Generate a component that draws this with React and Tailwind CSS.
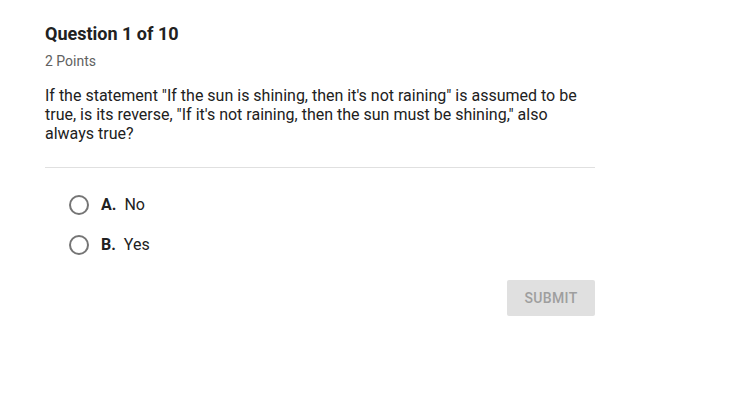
export default function App() {
  const options = [
    { key: 'A', text: 'No' },
    { key: 'B', text: 'Yes' },
  ];

  return (
    <div className="min-h-screen bg-white font-['Roboto',sans-serif] text-[#212121]">
      <div className="w-[550px] ml-[45px] pt-[24px]">
        {/* Header */}
        <h1 className="text-[18px] leading-[20px] font-bold text-[#212121]">Question 1 of 10</h1>
        <p className="mt-[9px] text-[14px] leading-[16px] text-[#616161]">2 Points</p>

        {/* Question */}
        <p className="mt-[17px] text-[16px] leading-[19px] text-[#212121] pb-[24px] border-b border-[#e0e0e0]">
          If the statement "If the sun is shining, then it's not raining" is assumed to be true, is its reverse, "If it's not raining, then the sun must be shining," also always true?
        </p>

        {/* Options */}
        <div className="mt-[27px] pl-[24px] flex flex-col gap-[20px]">
          {options.map((opt) => (
            <label key={opt.key} className="flex items-center h-[20px] cursor-pointer">
              <span className="w-[20px] h-[20px] rounded-full border-2 border-[#757575] shrink-0" />
              <span className="ml-[12px] text-[16px] font-bold text-[#212121]">{opt.key}.</span>
              <span className="ml-[8px] text-[16px] text-[#212121]">{opt.text}</span>
            </label>
          ))}
        </div>

        {/* Submit */}
        <div className="mt-[25px] flex justify-end">
          <button className="w-[88px] h-[36px] rounded-[2px] bg-[#e0e0e0] text-[14px] font-medium tracking-wide text-[#9e9e9e] uppercase">
            Submit
          </button>
        </div>
      </div>
    </div>
  );
}
